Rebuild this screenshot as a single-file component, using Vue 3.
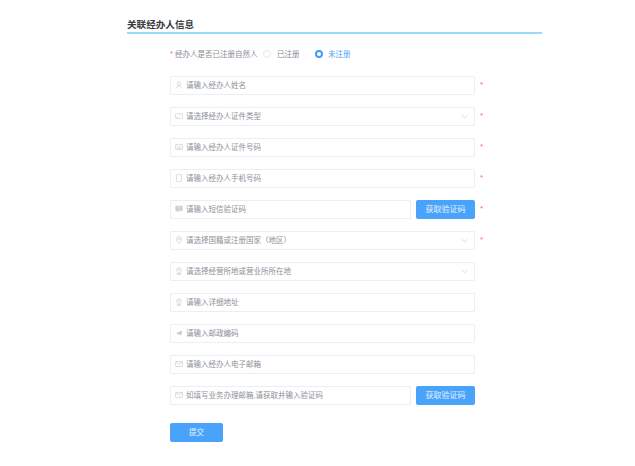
<script setup>
const rows = [
  { icon: 'user', text: '请输入经办人姓名', req: true },
  { icon: 'card', text: '请选择经办人证件类型', req: true, select: true },
  { icon: 'idcard', text: '请输入经办人证件号码', req: true },
  { icon: 'phone', text: '请输入经办人手机号码', req: true },
  { icon: 'msg', text: '请输入短信验证码', req: true, btn: true },
  { icon: 'pin', text: '请选择国籍或注册国家（地区）', req: true, select: true },
  { icon: 'pin2', text: '请选择经营所地或营业所所在地', select: true },
  { icon: 'pin2', text: '请输入详细地址' },
  { icon: 'plane', text: '请输入邮政编码' },
  { icon: 'mail', text: '请输入经办人电子邮箱' },
  { icon: 'mail', text: '如填写业务办理邮箱,请获取并输入验证码', btn: true },
]
</script>

<template>
  <main class="page">
    <h2 class="title">关联经办人信息</h2>
    <div class="form">
      <div class="radio-row">
        <span class="star-inline">*</span>
        <span class="label">经办人是否已注册自然人</span>
        <span class="radio"></span>
        <span class="opt">已注册</span>
        <span class="radio on"></span>
        <span class="opt active">未注册</span>
      </div>
      <div class="rows">
        <div v-for="(r, i) in rows" :key="i" class="row">
          <div class="field">
            <svg class="icon" viewBox="0 0 10 10" fill="none" stroke="#c6c9d1" stroke-width="0.8">
              <template v-if="r.icon === 'user'">
                <circle cx="5" cy="3" r="2.1" />
                <path d="M1.500 9.400c.3-2.400 1.700-3.600 3.500-3.600s3.200 1.200 3.500 3.600" />
              </template>
              <template v-else-if="r.icon === 'card'">
                <rect x="0.600" y="2" width="8.800" height="6.200" rx="0.800" />
                <path d="M2 6.500h2.500M6 4h2" />
              </template>
              <template v-else-if="r.icon === 'idcard'">
                <rect x="0.600" y="1.800" width="8.800" height="6.400" rx="0.800" />
                <path d="M2 4l2 1.500L8 3.600M2 6.600h6" />
              </template>
              <template v-else-if="r.icon === 'phone'">
                <rect x="1.800" y="0.600" width="6.400" height="8.800" rx="0.900" />
              </template>
              <template v-else-if="r.icon === 'msg'">
                <path d="M1 1.500h8v5.500H4.500L3 8.400V7H1z" fill="#c6c9d1" />
                <path d="M2.400 3.200h5.200M2.400 5h5.200" stroke="#fff" stroke-width="0.500" />
              </template>
              <template v-else-if="r.icon === 'pin'">
                <path d="M5 9.500C3 7.500 1.800 5.800 1.800 3.900a3.200 3.200 0 0 1 6.400 0C8.200 5.800 7 7.500 5 9.500z" />
                <circle cx="5" cy="3.900" r="1.100" />
              </template>
              <template v-else-if="r.icon === 'pin2'">
                <path d="M5 8.200C3.200 6.500 2.200 5.200 2.200 3.600a2.800 2.800 0 0 1 5.600 0C7.800 5.200 6.800 6.500 5 8.200z" />
                <ellipse cx="5" cy="8.600" rx="2.800" ry="0.900" />
                <circle cx="5" cy="3.600" r="0.900" />
              </template>
              <template v-else-if="r.icon === 'plane'">
                <path d="M1 5.200L9.500 2 7.500 8 5 6.200 4 8.200 3.400 5.800z" fill="#c6c9d1" stroke="none" />
              </template>
              <template v-else>
                <rect x="0.600" y="1.800" width="8.800" height="6.400" rx="0.800" />
                <path d="M0.900 2.400L5 5.500l4.100-3.100" />
              </template>
            </svg>
            <span class="ph">{{ r.text }}</span>
            <svg v-if="r.select" class="chev" viewBox="0 0 8 5" fill="none" stroke="#c9ccd4" stroke-width="0.800">
              <path d="M0.700 0.800L4 4l3.300-3.200" />
            </svg>
          </div>
          <button v-if="r.btn" class="code" type="button">获取验证码</button>
          <span v-if="r.req" class="star">*</span>
        </div>
      </div>
      <button class="submit" type="button">提交</button>
    </div>
  </main>
</template>

<style scoped>
.page {
  width: 635px;
  height: 466px;
  box-sizing: border-box;
  padding: 17px 93px 0 127px;
  background: #fff;
  font-family: "Liberation Sans", "Noto Sans CJK SC", sans-serif;
  overflow: hidden;
}
.title {
  margin: 0;
  height: 15px;
  line-height: 15px;
  font-size: 9.600px;
  font-weight: 700;
  color: #3a3c42;
  border-bottom: 2px solid #9adcf7;
}
.form {
  padding: 0 0 0 43px;
}
.radio-row {
  display: flex;
  align-items: center;
  height: 16px;
  margin-top: 12px;
  font-size: 7.500px;
  line-height: 12px;
  color: #868a92;
  white-space: nowrap;
}
.star-inline {
  color: #f56c7b;
  width: 5px;
  flex: none;
}
.label {
  width: 88px;
  flex: none;
  padding-top: 2px;
}
.radio {
  width: 8px;
  height: 8px;
  border: 1px solid #e6e8ec;
  border-radius: 50%;
  box-sizing: border-box;
  margin-right: 6px;
  flex: none;
}
.radio.on {
  border: 2.500px solid #3f9cf7;
  background: #fff;
  margin-left: 15px;
  margin-right: 5px;
}
.opt {
  width: 23px;
  flex: none;
  padding-top: 2px;
}
.active {
  color: #4aa3f8;
}
.rows {
  display: flex;
  flex-direction: column;
  gap: 11.500px;
  margin-top: 13.500px;
}
.row {
  display: flex;
  align-items: center;
  position: relative;
  width: 305px;
  height: 19.500px;
  gap: 5px;
}
.field {
  flex: 1;
  height: 19.500px;
  box-sizing: border-box;
  border: 1px solid #eceef2;
  border-radius: 1px;
  display: flex;
  align-items: center;
  padding: 0 6px 0 4px;
  font-size: 7.500px;
  line-height: 12px;
  color: #8c9098;
  background: #fff;
  white-space: nowrap;
}
.icon {
  width: 8px;
  height: 8px;
  margin-right: 3px;
  flex: none;
}
.ph {
  flex: 1;
  padding-top: 2px;
}
.chev {
  width: 7px;
  height: 5px;
  flex: none;
}
.code {
  width: 59px;
  height: 19.500px;
  padding: 0 0 2px;
  flex: none;
  border: 0;
  border-radius: 2px;
  background: #4aa3fb;
  color: #e3f0ff;
  font: 8px "Liberation Sans", "Noto Sans CJK SC", sans-serif;
}
.star {
  position: absolute;
  left: 310px;
  top: 4px;
  font-size: 8px;
  line-height: 10px;
  color: #f56c7b;
}
.submit {
  display: block;
  width: 53px;
  height: 19.500px;
  margin-top: 17.500px;
  padding: 0 0 1px;
  border: 0;
  border-radius: 2px;
  background: #4aa3fb;
  color: #e3f0ff;
  font: 7.500px "Liberation Sans", "Noto Sans CJK SC", sans-serif;
}
</style>
